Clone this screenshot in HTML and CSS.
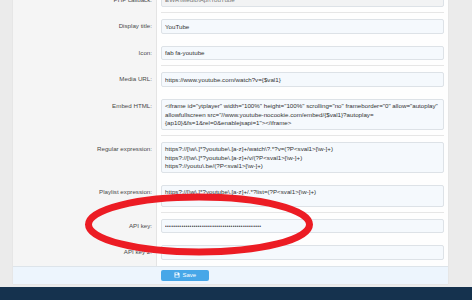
FILE: index.html
```html
<!DOCTYPE html>
<html lang="en">
<head>
<meta charset="utf-8">
<title>Media site options</title>
<link rel="stylesheet" href="styles.css">
</head>
<body>
<div class="page">
  <form class="panel">
    <div class="rows">
      <div class="row row--sep">
        <div class="label">PHP callback:</div>
        <div class="field"><input class="input input--ro" value="EWR\Medio\Api\YouTube" readonly></div>
      </div>
      <div class="row">
        <div class="label">Display title:</div>
        <div class="field"><input class="input" value="YouTube"></div>
      </div>
      <div class="row row--sep">
        <div class="label">Icon:</div>
        <div class="field"><input class="input" value="fab fa-youtube"></div>
      </div>
      <div class="row">
        <div class="label">Media URL:</div>
        <div class="field"><input class="input" value="https://www.youtube.com/watch?v={$val1}"></div>
      </div>
      <div class="row row--sep">
        <div class="label">Embed HTML:</div>
        <div class="field"><textarea class="input area area--3" wrap="off">&lt;iframe id="ytplayer" width="100%" height="100%" scrolling="no" frameborder="0" allow="autoplay"
allowfullscreen src="//www.youtube-nocookie.com/embed/{$val1}?autoplay=
{ap10}&amp;fs=1&amp;rel=0&amp;enablejsapi=1"&gt;&lt;/iframe&gt;</textarea></div>
      </div>
      <div class="row">
        <div class="label">Regular expression:</div>
        <div class="field"><textarea class="input area area--3" wrap="off">https?://[\w\.]*?youtube\.[a-z]+/watch\?.*?v=(?P&lt;sval1&gt;[\w-]+)
https?://[\w\.]*?youtube\.[a-z]+/v/(?P&lt;sval1&gt;[\w-]+)
https?://youtu\.be/(?P&lt;sval1&gt;[\w-]+)</textarea></div>
      </div>
      <div class="row row--sep">
        <div class="label">Playlist expression:</div>
        <div class="field"><textarea class="input area area--2" wrap="off">https?://[\w\.]*?youtube\.[a-z]+/.*?list=(?P&lt;sval1&gt;[\w-]+)</textarea></div>
      </div>
      <div class="row">
        <div class="label">API key:</div>
        <div class="field"><input class="input input--pw" type="password" value="xxxxxxxxxxxxxxxxxxxxxxxxxxxxxxxxxxxxxxxxxxxxxxx"></div>
      </div>
      <div class="row">
        <div class="label">API key 2:</div>
        <div class="field"><input class="input" value=""></div>
      </div>
    </div>
    <div class="submit">
      <button type="button" class="btn">
        <svg class="btn-icon" viewBox="0 0 12 12" aria-hidden="true">
          <path d="M1 1h8.2L11 2.8V11H1z" fill="#fff"/>
          <rect x="3" y="1.8" width="5" height="3" fill="#47a7e8"/>
          <rect x="6" y="2.3" width="1.2" height="2" fill="#fff"/>
          <rect x="2.8" y="6.5" width="6.4" height="3.8" fill="#47a7e8"/>
        </svg>
        <span>Save</span>
      </button>
    </div>
  </form>
</div>
<div class="footer"></div>
<svg class="mark" viewBox="0 0 472 300" aria-hidden="true">
  <ellipse cx="199" cy="224.5" rx="110.5" ry="27.5" fill="none" stroke="#ec1c24" stroke-width="7"/>
</svg>
</body>
</html>
```

FILE: styles.css
```css
html, body {
  margin: 0;
  padding: 0;
}
body {
  background: #ebebeb;
  font-family: "Liberation Sans", Arial, sans-serif;
  width: 472px;
  height: 300px;
  overflow: hidden;
  position: relative;
}
.page {
  padding: 0 24px 3.5px 13px;
}
.panel {
  margin: -13.5px 0 0 0;
  background: #fefefe;
  box-shadow: 0 0 1px rgba(0,0,0,0.12);
}
.rows {
  display: flex;
  flex-direction: column;
}
.row {
  display: flex;
}
.label {
  flex: 0 0 139px;
  padding: 6px 4px 6px 0;
  background: #f5f5f5;
  border-right: 1px solid #e4e4e4;
  text-align: right;
  font-size: 6.2px;
  line-height: 14.5px;
  color: #4a4a4a;
  white-space: nowrap;
}
.field {
  flex: 1 1 auto;
  padding: 6px 4px;
  display: flex;
}
.row--sep .field {
  background: linear-gradient(#e6e6e6, #e6e6e6) no-repeat 4px 100% / calc(100% - 8px) 1px;
}
.input {
  box-sizing: border-box;
  width: 100%;
  height: 14.5px;
  margin: 0;
  padding: 0 3px;
  border: 1px solid #dde2e7;
  border-radius: 2px;
  background: #f5f9fd;
  font-family: "Liberation Sans", Arial, sans-serif;
  font-size: 6.2px;
  color: #333;
  outline: none;
}
.input--ro {
  background: #f2f3f4;
  color: #777;
}
.input--pw {
  font-size: 5px;
  letter-spacing: 0.3px;
  color: #444;
}
.area {
  resize: none;
  overflow: hidden;
  white-space: pre;
  line-height: 8.5px;
  padding: 2.5px 3px;
  display: block;
}
.area--3 { height: 31px; }
.area--2 { height: 22px; }
.submit {
  border-top: 1px solid #dde4ea;
  background: #edf5fd;
  padding: 3px 4px 3px 148px;
  display: flex;
}
.btn {
  box-sizing: border-box;
  width: 48px;
  height: 11px;
  margin: 0;
  padding: 0;
  border: 0;
  border-radius: 2px;
  background: #47a7e8;
  color: #fff;
  font-family: "Liberation Sans", Arial, sans-serif;
  font-size: 6px;
  display: flex;
  align-items: center;
  justify-content: center;
  gap: 2.5px;
}
.btn-icon {
  width: 6px;
  height: 6px;
}
.footer {
  height: 20px;
  background: #15324e;
}
.mark {
  position: absolute;
  left: 0;
  top: 0;
  width: 472px;
  height: 300px;
  pointer-events: none;
}
```
